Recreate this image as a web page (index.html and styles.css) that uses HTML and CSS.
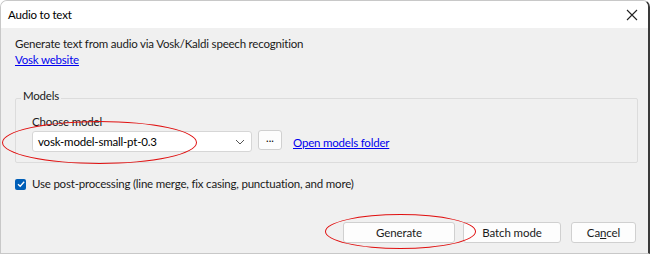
FILE: index.html
```html
<!DOCTYPE html>
<html lang="en">

<head>
    <meta charset="UTF-8">
    <title>Audio to text</title>
    <link rel="stylesheet" href="styles.css">
</head>

<body>
    <div class="window">
        <div class="titlebar">
            <span class="title">Audio to text</span>
            <svg class="close" width="12" height="12" viewBox="0 0 12 12">
                <path d="M1 1L11 11M11 1L1 11" stroke="#222" stroke-width="1.1" fill="none" />
            </svg>
        </div>

        <div class="content">
            <p class="intro">Generate text from audio via Vosk/Kaldi speech recognition</p>
            <a href="#" class="link">Vosk website</a>

            <!-- Models group -->
            <fieldset class="group">
                <legend>Models</legend>
                <div class="field-label">Choose model</div>
                <div class="model-row">
                    <div class="combo">
                        <span>vosk-model-small-pt-0.3</span>
                        <svg width="10" height="6" viewBox="0 0 10 6">
                            <path d="M1 1L5 5L9 1" stroke="#555" stroke-width="1" fill="none" />
                        </svg>
                    </div>
                    <button class="btn-dots">...</button>
                    <a href="#" class="link">Open models folder</a>
                    <div class="ellipse ellipse-combo"></div>
                </div>
            </fieldset>

            <label class="check-row">
                <span class="checkbox">
                    <svg width="10" height="10" viewBox="0 0 10 10">
                        <path d="M2 5.2L4.2 7.3L8.2 2.8" stroke="#fff" stroke-width="1.3" fill="none" />
                    </svg>
                </span>
                Use post-processing (line merge, fix casing, punctuation, and more)
            </label>

            <div class="actions">
                <button class="btn btn-generate">Generate</button>
                <button class="btn btn-batch">Batch mode</button>
                <button class="btn btn-cancel">Ca<u>n</u>cel</button>
                <div class="ellipse ellipse-generate"></div>
            </div>
        </div>
    </div>
</body>

</html>
```

FILE: styles.css
```css
body {
    margin: 0;
    background: #fff;
    font-family: 'Segoe UI', 'Lato', 'Noto Sans', sans-serif;
    font-size: 11.5px;
    letter-spacing: -0.2px;
    color: #1a1a1a;
}

.window {
    width: 647px;
    height: 252px;
    border: 1px solid #c8c8c8;
    border-right: 2px solid #3a3a3a;
    border-radius: 7px 7px 0 0;
    background: #f0f0f0;
    overflow: hidden;
    display: flex;
    flex-direction: column;
}

.titlebar {
    height: 27px;
    background: #fff;
    display: flex;
    align-items: center;
    justify-content: space-between;
    padding: 0 10px 0 7px;
    flex-shrink: 0;
}

.title {
    color: #000;
}

.close {
    margin-top: 1px;
}

.content {
    padding: 8px 10px 0 14px;
    display: flex;
    flex-direction: column;
}

.intro {
    margin: 0;
    line-height: 16px;
}

.link {
    color: #0000ee;
    text-decoration: underline;
    line-height: 15px;
    align-self: flex-start;
}

.group {
    margin: 22px 0 0 0;
    padding: 7px 0 10px 16px;
    border: 1px solid #dcdcdc;
    border-radius: 2px;
}

.group legend {
    padding: 0 2px 4px 2px;
    margin-left: -11px;
    line-height: 14px;
}

.field-label {
    line-height: 16px;
}

.model-row {
    position: relative;
    display: flex;
    align-items: flex-start;
    margin-top: 1px;
}

.combo {
    width: 207px;
    height: 19px;
    background: #fff;
    border: 1px solid #d6d6d6;
    border-radius: 3px;
    display: flex;
    align-items: center;
    justify-content: space-between;
    padding: 0 6px 0 5px;
}

.combo span {
    color: #000;
}

.btn-dots {
    width: 24px;
    height: 20px;
    margin-left: 6px;
    margin-top: -1px;
    background: #fdfdfd;
    border: 1px solid #d0d0d0;
    border-radius: 3px;
    font-size: 11px;
    line-height: 10px;
    padding: 0 0 4px 0;
    font-family: inherit;
}

.model-row .link {
    margin-left: 11px;
    margin-top: 4px;
}

.check-row {
    display: flex;
    align-items: center;
    gap: 6px;
    margin-top: 13px;
    line-height: 16px;
}

.checkbox {
    width: 11px;
    height: 11px;
    background: #005fb8;
    border-radius: 2px;
    display: flex;
    align-items: center;
    justify-content: center;
}

.actions {
    position: relative;
    display: flex;
    justify-content: flex-end;
    gap: 8px;
    margin: 30px 2px 0 0;
}

.btn {
    height: 21px;
    background: #fdfdfd;
    border: 1px solid #d0d0d0;
    border-radius: 3px;
    font-family: inherit;
    font-size: 11.5px;
    letter-spacing: -0.1px;
    color: #1a1a1a;
    padding: 0;
}

.btn-generate {
    width: 112px;
}

.btn-batch {
    width: 98px;
}

.btn-cancel {
    width: 65px;
    margin-left: 2px;
}

.btn u {
    text-decoration: underline;
}

/* red annotation rings drawn over the screenshot */
.ellipse {
    position: absolute;
    border: 1.3px solid #e01010;
    border-radius: 50%;
    pointer-events: none;
}

.ellipse-combo {
    left: -30px;
    top: -10px;
    width: 193px;
    height: 41px;
}

.ellipse-generate {
    left: 310px;
    top: -8px;
    width: 149px;
    height: 33px;
}
```
